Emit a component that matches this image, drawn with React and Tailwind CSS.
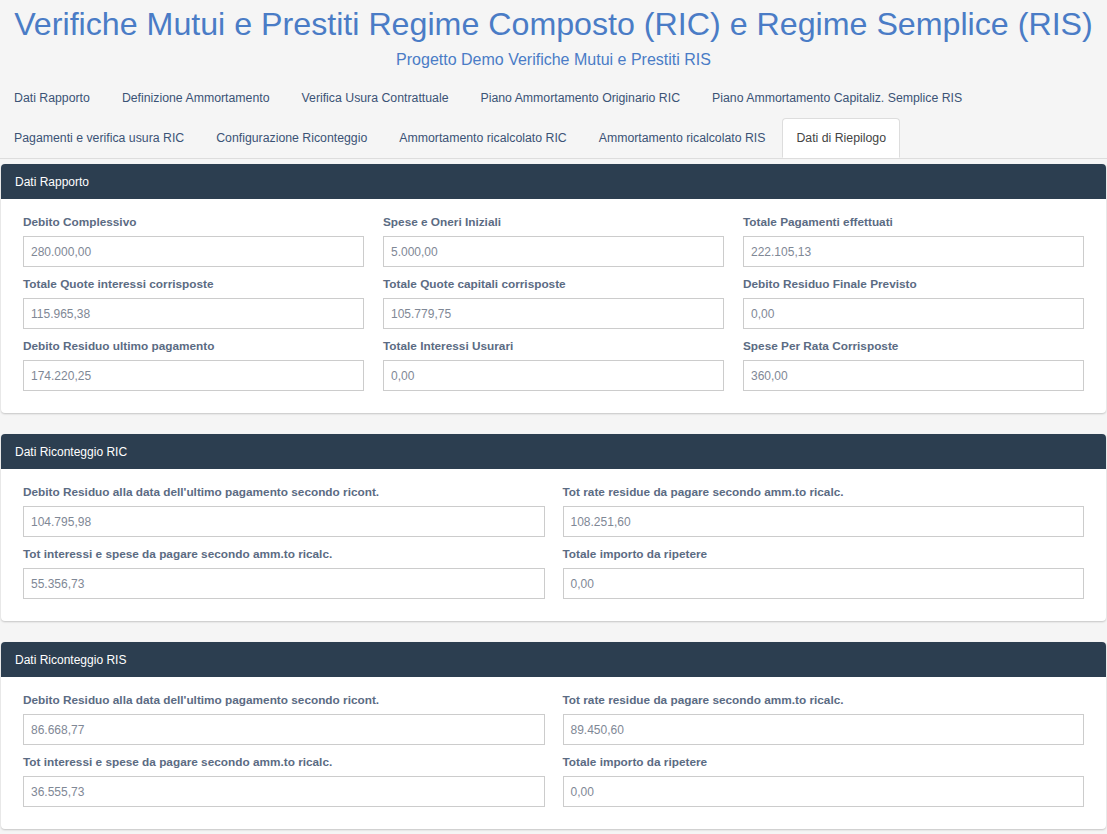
const tabsRow1 = [
  "Dati Rapporto",
  "Definizione Ammortamento",
  "Verifica Usura Contrattuale",
  "Piano Ammortamento Originario RIC",
  "Piano Ammortamento Capitaliz. Semplice RIS",
];
const tabsRow2 = [
  "Pagamenti e verifica usura RIC",
  "Configurazione Riconteggio",
  "Ammortamento ricalcolato RIC",
  "Ammortamento ricalcolato RIS",
  "Dati di Riepilogo",
];

const rapporto = [
  ["Debito Complessivo", "280.000,00"],
  ["Spese e Oneri Iniziali", "5.000,00"],
  ["Totale Pagamenti effettuati", "222.105,13"],
  ["Totale Quote interessi corrisposte", "115.965,38"],
  ["Totale Quote capitali corrisposte", "105.779,75"],
  ["Debito Residuo Finale Previsto", "0,00"],
  ["Debito Residuo ultimo pagamento", "174.220,25"],
  ["Totale Interessi Usurari", "0,00"],
  ["Spese Per Rata Corrisposte", "360,00"],
];

const ric = [
  ["Debito Residuo alla data dell'ultimo pagamento secondo ricont.", "104.795,98"],
  ["Tot rate residue da pagare secondo amm.to ricalc.", "108.251,60"],
  ["Tot interessi e spese da pagare secondo amm.to ricalc.", "55.356,73"],
  ["Totale importo da ripetere", "0,00"],
];

const ris = [
  ["Debito Residuo alla data dell'ultimo pagamento secondo ricont.", "86.668,77"],
  ["Tot rate residue da pagare secondo amm.to ricalc.", "89.450,60"],
  ["Tot interessi e spese da pagare secondo amm.to ricalc.", "36.555,73"],
  ["Totale importo da ripetere", "0,00"],
];

function Tab({ label, active }) {
  if (active) {
    return (
      <div className="mr-[2px] -mb-px px-[13px] h-[40px] flex items-center border border-[#ddd] border-b-white bg-white rounded-t-[4px] text-[#444]">
        {label}
      </div>
    );
  }
  return (
    <div className="mr-[2px] px-[15px] h-[40px] flex items-center text-[#3b5376]">
      {label}
    </div>
  );
}

function Field({ label, value }) {
  return (
    <div className="mb-[9px]">
      <div className="font-bold text-[11.8px] leading-[17px] text-[#5b6b83] mb-[5px]">{label}</div>
      <div className="h-[31px] border border-[#ccc] bg-white px-[7px] flex items-center text-[12px] text-[#7f8896]">
        {value}
      </div>
    </div>
  );
}

function Panel({ title, fields, cols }) {
  return (
    <div className="mx-px bg-white rounded-[4px] shadow-[0_1px_2px_rgba(0,0,0,0.2)] overflow-hidden">
      <div className="h-[35px] bg-[#2c3e50] text-white text-[12px] flex items-center px-[14px]">{title}</div>
      <div className={"grid px-[22px] pt-[15px] pb-[13px] " + (cols === 3 ? "grid-cols-3 gap-x-[19px]" : "grid-cols-2 gap-x-[18px]")}>
        {fields.map(([l, v]) => (
          <Field key={l} label={l} value={v} />
        ))}
      </div>
    </div>
  );
}

export default function App() {
  return (
    <div className="min-h-screen bg-[#f5f5f5] font-['Liberation_Sans',Arial,sans-serif] pb-[6px]">
      <div className="text-center pt-[3px]">
        <h1 className="text-[32.2px] leading-[42px] text-[#4a7cc6]">
          Verifiche Mutui e Prestiti Regime Composto (RIC) e Regime Semplice (RIS)
        </h1>
        <div className="text-[16px] leading-[20px] mt-[5px] text-[#4a7cc6]">Progetto Demo Verifiche Mutui e Prestiti RIS</div>
      </div>
      <div className="mt-[8px] border-b border-[#ddd] text-[12.3px]">
        <div className="flex -ml-px">
          {tabsRow1.map((t) => (
            <Tab key={t} label={t} />
          ))}
        </div>
        <div className="flex -ml-px">
          {tabsRow2.map((t, i) => (
            <Tab key={t} label={t} active={i === 4} />
          ))}
        </div>
      </div>
      <div className="mt-[5px] flex flex-col gap-[21px]">
        <Panel title="Dati Rapporto" fields={rapporto} cols={3} />
        <Panel title="Dati Riconteggio RIC" fields={ric} cols={2} />
        <Panel title="Dati Riconteggio RIS" fields={ris} cols={2} />
      </div>
    </div>
  );
}
